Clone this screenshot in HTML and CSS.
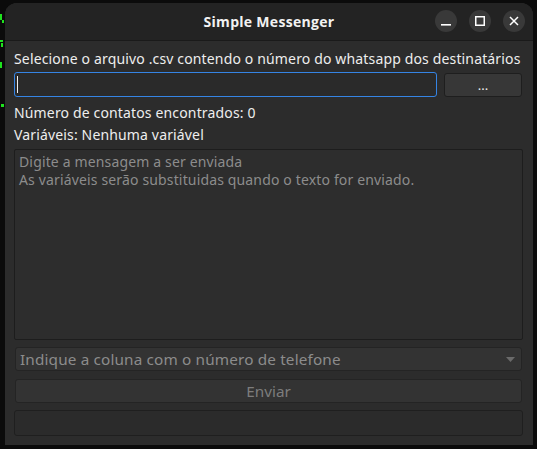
FILE: index.html
```html
<!DOCTYPE html>
<html lang="pt">
<head>
<meta charset="utf-8">
<title>Simple Messenger</title>
<link rel="stylesheet" href="styles.css">
</head>
<body>
<div class="desktop">
  <div class="term" aria-hidden="true">
    <svg width="5" height="140" viewBox="0 0 5 140">
      <rect x="0" y="40" width="3" height="2" fill="#1ee31e"/>
      <rect x="1" y="43" width="2" height="4" fill="#1ee31e"/>
      <rect x="0" y="14" width="2" height="6" fill="#1ee31e"/>
      <rect x="2" y="20" width="2" height="3" fill="#1ee31e"/>
      <rect x="0" y="62" width="2" height="6" fill="#1ee31e"/>
      <rect x="1" y="104" width="3" height="3" fill="#1ee31e"/>
    </svg>
  </div>
  <div class="window">
    <header class="titlebar">
      <div class="title">Simple Messenger</div>
      <div class="controls">
        <button class="wbtn" aria-label="Minimizar">
          <svg width="10" height="10" viewBox="0 0 10 10"><rect x="0" y="8" width="10" height="1.6" fill="#fff"/></svg>
        </button>
        <button class="wbtn" aria-label="Maximizar">
          <svg width="10" height="10" viewBox="0 0 10 10"><rect x="0.75" y="0.75" width="8.5" height="8.5" fill="none" stroke="#fff" stroke-width="1.5"/></svg>
        </button>
        <button class="wbtn" aria-label="Fechar">
          <svg width="10" height="10" viewBox="0 0 10 10"><path d="M1 1L9 9M9 1L1 9" stroke="#fff" stroke-width="1.5"/></svg>
        </button>
      </div>
    </header>
    <main class="content">
      <div class="label first">Selecione o arquivo .csv contendo o número do whatsapp dos destinatários</div>
      <div class="filerow">
        <div class="inputwrap">
          <input class="fileinput" type="text">
          <span class="caret"></span>
        </div>
        <button class="browse">...</button>
      </div>
      <div class="label count">Número de contatos encontrados: 0</div>
      <div class="label vars">Variáveis: Nenhuma variável</div>
      <textarea class="message" placeholder="Digite a mensagem a ser enviada&#10;As variáveis serão substituidas quando o texto for enviado."></textarea>
      <div class="combo">
        <span>Indique a coluna com o número de telefone</span>
        <svg class="arrow" width="9" height="5" viewBox="0 0 9 5"><path d="M0 0H9L4.5 5Z" fill="#6a6a6a"/></svg>
      </div>
      <button class="send" disabled>Enviar</button>
      <div class="status"></div>
    </main>
  </div>
</div>
</body>
</html>
```

FILE: styles.css
```css
* { box-sizing: border-box; }
html, body { margin: 0; padding: 0; }
body {
  width: 537px;
  height: 449px;
  overflow: hidden;
  background: #0b0b0b;
  font-family: "Noto Sans", "DejaVu Sans", sans-serif;
  font-size: 14px;
  color: #eeeeee;
}
.desktop {
  display: flex;
  height: 449px;
  padding: 3px 4px 4px 0;
}
.term {
  width: 5px;
  flex: none;
  overflow: hidden;
}
.term svg { display: block; margin-top: -3px; }
.window {
  flex: 1;
  display: flex;
  flex-direction: column;
  background: #2c2c2c;
  border-radius: 12px 12px 0 0;
  overflow: hidden;
}
.titlebar {
  position: relative;
  height: 38px;
  flex: none;
  background: #232323;
  border-bottom: 1px solid #1a1a1a;
  display: flex;
  align-items: center;
  justify-content: center;
}
.title {
  font-family: "Open Sans", "Noto Sans", sans-serif;
  font-weight: 700;
  font-size: 14px;
  letter-spacing: 0.3px;
  color: #f2f2f2;
}
.controls {
  position: absolute;
  right: 8px;
  top: 7px;
  display: flex;
  gap: 12px;
}
.wbtn {
  width: 22px;
  height: 22px;
  border-radius: 50%;
  border: none;
  background: #393939;
  padding: 0;
  display: flex;
  align-items: center;
  justify-content: center;
}
.content {
  flex: 1;
  display: flex;
  flex-direction: column;
  padding: 9px 10px 9px 9px;
}
.label {
  height: 18px;
  line-height: 18px;
  white-space: nowrap;
  letter-spacing: 0.15px;
}
.filerow {
  display: flex;
  gap: 7px;
  margin-top: 4px;
  height: 25px;
}
.inputwrap {
  position: relative;
  flex: 1;
  display: flex;
}
.fileinput {
  flex: 1;
  width: 100%;
  height: 25px;
  background: #2a2a2a;
  border: 1px solid #3584e4;
  border-radius: 3px;
  outline: none;
  color: #eee;
  padding: 0 5px;
  font: inherit;
}
.caret {
  position: absolute;
  left: 3px;
  top: 4px;
  width: 1px;
  height: 17px;
  background: #f0f0f0;
}
.browse {
  width: 78px;
  height: 24px;
  margin-right: 1px;
  margin-top: 1px;
  background: #373737;
  border: 1px solid #1e1e1e;
  border-radius: 3px;
  color: #eee;
  font: inherit;
  font-size: 13px;
  line-height: 1;
}
.label.count { margin-top: 7px; }
.label.vars { margin-top: 4px; }
.message {
  margin-top: 5px;
  height: 191px;
  width: 100%;
  resize: none;
  background: #2d2d2d;
  border: 1px solid #1d1d1d;
  border-radius: 2px;
  padding: 3px 4px;
  color: #eee;
  font: inherit;
  line-height: 18px;
  outline: none;
  letter-spacing: 0.15px;
}
.message::placeholder { color: #8c8c8c; }
.combo {
  margin: 7px 1px 0 1px;
  height: 24px;
  display: flex;
  align-items: center;
  justify-content: space-between;
  background: #333333;
  border: 1px solid #242424;
  border-radius: 3px;
  padding: 0 6px 0 4px;
  color: #8c8c8c;
  font-size: 15.3px;
  letter-spacing: 0.15px;
}
.send {
  margin: 8px 1px 0 1px;
  height: 24px;
  background: #333333;
  border: 1px solid #242424;
  border-radius: 3px;
  color: #7d7d7d;
  font: inherit;
  font-size: 15.3px;
  padding: 0;
}
.status {
  margin: 7px 0 0 0;
  height: 26px;
  border: 1px solid #1f1f1f;
  border-radius: 3px;
  background: #2b2b2b;
}
```
